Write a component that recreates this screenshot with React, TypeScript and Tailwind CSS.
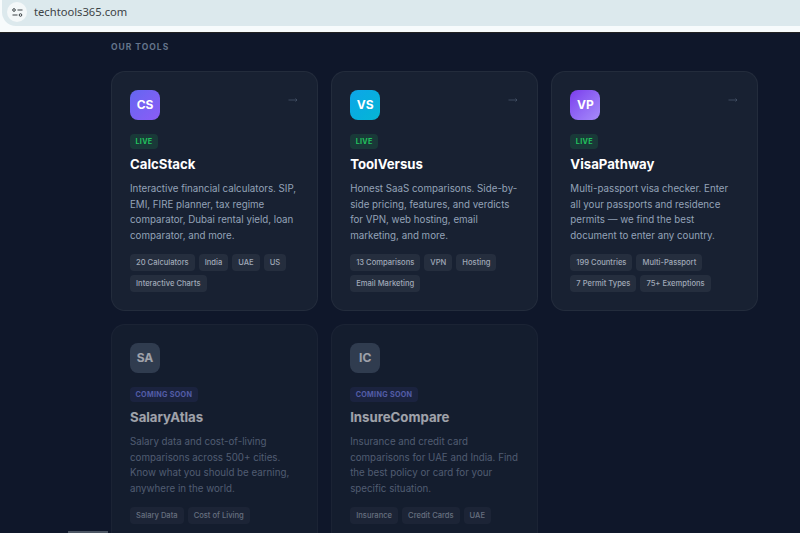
const TOOLS = [
  {
    abbr: "CS",
    icon: "bg-gradient-to-br from-[#6366f1] to-[#8b5cf6]",
    name: "CalcStack",
    desc: "Interactive financial calculators. SIP, EMI, FIRE planner, tax regime comparator, Dubai rental yield, loan comparator, and more.",
    tags: ["20 Calculators", "India", "UAE", "US", "Interactive Charts"],
    live: true,
  },
  {
    abbr: "VS",
    icon: "bg-gradient-to-br from-[#0ea5e9] to-[#06b6d4]",
    name: "ToolVersus",
    desc: "Honest SaaS comparisons. Side-by-side pricing, features, and verdicts for VPN, web hosting, email marketing, and more.",
    tags: ["13 Comparisons", "VPN", "Hosting", "Email Marketing"],
    live: true,
  },
  {
    abbr: "VP",
    icon: "bg-gradient-to-br from-[#7c3aed] to-[#a78bfa]",
    name: "VisaPathway",
    desc: "Multi-passport visa checker. Enter all your passports and residence permits — we find the best document to enter any country.",
    tags: ["199 Countries", "Multi-Passport", "7 Permit Types", "75+ Exemptions"],
    live: true,
  },
  {
    abbr: "SA",
    icon: "bg-[#475569]",
    name: "SalaryAtlas",
    desc: "Salary data and cost-of-living comparisons across 500+ cities. Know what you should be earning, anywhere in the world.",
    tags: ["Salary Data", "Cost of Living"],
    live: false,
  },
  {
    abbr: "IC",
    icon: "bg-[#475569]",
    name: "InsureCompare",
    desc: "Insurance and credit card comparisons for UAE and India. Find the best policy or card for your specific situation.",
    tags: ["Insurance", "Credit Cards", "UAE"],
    live: false,
  },
]

function ToolCard({ tool }: { tool: (typeof TOOLS)[number] }) {
  return (
    <div className={`relative h-[239.5px] rounded-[14px] border border-[#ffffff0d] bg-[#182132] px-[18px] pt-[18px] ${tool.live ? "" : "opacity-60"}`}>
      {tool.live && (
        <svg className="absolute right-[19px] top-[25px]" width="10" height="6" viewBox="0 0 10 6" fill="none" stroke="#475569" strokeWidth="0.8">
          <path d="M0.5 3h8.5M7.5 1.5 9 3 7.5 4.5" />
        </svg>
      )}
      <div className={`flex h-[30px] w-[30px] items-center justify-center rounded-lg text-[12px] font-bold text-white ${tool.icon}`}>
        {tool.abbr}
      </div>
      {tool.live ? (
        <span className="mt-[14px] block w-fit rounded-[4px] bg-[#22c55e26] px-[5.5px] py-[2px] text-[7.2px] font-bold leading-[11px] tracking-[0.3px] text-[#22c55e]">LIVE</span>
      ) : (
        <span className="mt-[14px] block w-fit rounded-[4px] bg-[#6366f126] px-[5.5px] py-[2px] text-[7.2px] font-bold leading-[11px] tracking-[0.3px] text-[#818cf8]">COMING SOON</span>
      )}
      <h3 className="mt-[4px] text-[13.2px] font-bold leading-[22px] text-white">{tool.name}</h3>
      <p className={`mt-[6px] text-[9.75px] leading-[15.6px] ${tool.live ? "text-[#94a3b8]" : "text-[#7c8aa0]"}`}>{tool.desc}</p>
      <div className="mt-[11px] flex flex-wrap gap-[4px]">
        {tool.tags.map(tag => (
          <span key={tag} className="rounded-[4px] bg-[#ffffff0f] px-[6px] py-[2px] text-[7.6px] font-medium leading-[13px] text-[#a0a9b8]">{tag}</span>
        ))}
      </div>
    </div>
  )
}

export default function App() {
  return (
    <div className="relative flex h-[533px] w-[800px] flex-col overflow-hidden bg-[#0f172a] font-['Inter',sans-serif]">
      {/* address bar */}
      <div className="flex h-[33px] shrink-0 flex-col border-b border-[#222] bg-[#f7fbfc]">
        <div className="ml-[2px] flex h-[26px] items-center rounded-bl-[14px] bg-[#dce9ed] pb-[2px] pl-[5px]">
          <div className="flex h-[20px] w-[20px] items-center justify-center rounded-full bg-[#f4f8f9]">
            <svg width="11" height="9" viewBox="0 0 11 9" fill="none" stroke="#3c4346" strokeWidth="1">
              <circle cx="2" cy="2" r="1.3" />
              <path d="M5.5 2h5M0.5 7h5" />
              <circle cx="8.5" cy="7" r="1.3" />
            </svg>
          </div>
          <span className="ml-[7px] font-['Noto_Sans',sans-serif] text-[11.2px] text-[#3c4346]">techtools365.com</span>
        </div>
      </div>
      <div className="grow pl-[111px] pr-[42px] pt-[8px]">
        <h2 className="text-[8.5px] font-bold leading-[13px] tracking-[1px] text-[#64748b]">OUR TOOLS</h2>
        <div className="mt-[17px] grid grid-cols-3 gap-[13.5px]">
          {TOOLS.map(tool => <ToolCard key={tool.abbr} tool={tool} />)}
        </div>
      </div>
      <div className="absolute bottom-0 left-[68px] h-[2px] w-[40px] bg-[#4b5563]" />
    </div>
  )
}
